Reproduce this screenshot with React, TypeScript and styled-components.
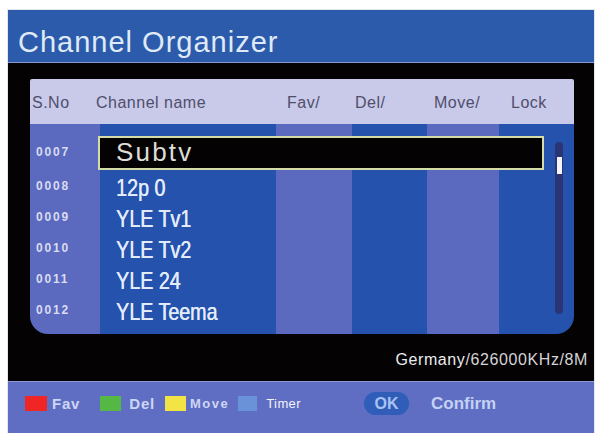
import React from 'react';
import styled, { createGlobalStyle } from 'styled-components';

const GlobalStyle = createGlobalStyle`
    body {
        margin: 0;
        background: #ffffff;
        font-family: 'Liberation Sans', Arial, sans-serif;
    }
`;

const channels = [
    { no: '0007', name: 'Subtv', selected: true },
    { no: '0008', name: '12p 0' },
    { no: '0009', name: 'YLE Tv1' },
    { no: '0010', name: 'YLE Tv2' },
    { no: '0011', name: 'YLE 24' },
    { no: '0012', name: 'YLE Teema' },
];

const keys = [
    { color: '#f02526', label: 'Fav', size: 15, weight: 700, spacing: 0.8, textColor: '#cdd6f6', gap: 5, after: 20, swatch: 22 },
    { color: '#55b844', label: 'Del', size: 15, weight: 700, spacing: 0.8, textColor: '#cdd6f6', gap: 8, after: 10, swatch: 21 },
    { color: '#f2e444', label: 'Move', size: 13, weight: 700, spacing: 1.5, textColor: '#cdd6f6', gap: 4, after: 9, swatch: 21 },
    { color: '#6a92d8', label: 'Timer', size: 13, weight: 400, spacing: 0.4, textColor: '#f2f4fb', gap: 9, after: 63, swatch: 19 },
];

export default function App() {
    return (
        <>
            <GlobalStyle />
            <Frame>
                <TitleBar>Channel Organizer</TitleBar>
                <Screen>
                    <Panel>
                        <Header>
                            <HeadCell>S.No</HeadCell>
                            <HeadCell>Channel name</HeadCell>
                            <HeadCell>Fav/</HeadCell>
                            <HeadCell>Del/</HeadCell>
                            <HeadCell>Move/</HeadCell>
                            <HeadCell>Lock</HeadCell>
                        </Header>
                        <Body>
                            <List>
                                {channels.map((ch) => (
                                    <Row key={ch.no} $selected={!!ch.selected}>
                                        <NoCell>{ch.no}</NoCell>
                                        <NameCell $selected={!!ch.selected}>
                                            {ch.selected ? <SelName>{ch.name}</SelName> : <Name>{ch.name}</Name>}
                                        </NameCell>
                                    </Row>
                                ))}
                            </List>
                            <Track>
                                <Thumb />
                            </Track>
                        </Body>
                    </Panel>
                    <Info>
                        <Region>Germany</Region>/626000KHz/8M
                    </Info>
                </Screen>
                <KeyBar>
                    {keys.map((k) => (
                        <Key key={k.label} $after={k.after}>
                            <Swatch $color={k.color} $width={k.swatch} />
                            <KeyLabel
                                $gap={k.gap}
                                $size={k.size}
                                $weight={k.weight}
                                $spacing={k.spacing}
                                $color={k.textColor}
                            >
                                {k.label}
                            </KeyLabel>
                        </Key>
                    ))}
                    <OkPill>OK</OkPill>
                    <Confirm>Confirm</Confirm>
                </KeyBar>
            </Frame>
        </>
    );
}

const Frame = styled.div`
    margin: 10px 0 0 8px;
    width: 586px;
    box-shadow: 0 0 0 1px #e4e6ee;
`;

const TitleBar = styled.div`
    height: 53px;
    box-sizing: border-box;
    padding: 17px 0 0 10px;
    background: #2d5bab;
    border-bottom: 1px solid #8898d4;
    color: #dfeaf6;
    font-size: 29px;
    letter-spacing: 1px;
    line-height: 30px;
`;

const Screen = styled.div`
    height: 318px;
    box-sizing: border-box;
    padding: 16px 20px 0 22px;
    background: #050204;
`;

const Panel = styled.div`
    width: 544px;
`;

const Header = styled.div`
    height: 45px;
    display: grid;
    grid-template-columns: 64px 191px 68px 79px 77px 1fr;
    align-items: center;
    padding-left: 2px;
    background: #c9c9e9;
    border-radius: 2px 2px 0 0;
`;

const HeadCell = styled.div`
    color: #4f4f6c;
    font-size: 16px;
    letter-spacing: 0.5px;
    padding-top: 2px;
`;

const Body = styled.div`
    height: 210px;
    display: flex;
    border-radius: 0 0 18px 18px;
    background: linear-gradient(
        to right,
        #5b69bf 0 70px,
        #2452ad 70px 246px,
        #5b69bf 246px 322px,
        #2452ad 322px 397px,
        #5b69bf 397px 469px,
        #2452ad 469px 544px
    );
`;

const List = styled.div`
    width: 514px;
    padding-top: 12px;
`;

const Row = styled.div<{ $selected: boolean }>`
    display: flex;
    align-items: center;
    height: ${(p) => (p.$selected ? 34 : 31)}px;
    margin-bottom: ${(p) => (p.$selected ? 2 : 0)}px;
`;

const NoCell = styled.div`
    width: 62px;
    padding-left: 6px;
    color: #d9dcf2;
    font-size: 12px;
    font-weight: 700;
    letter-spacing: 1.8px;
    margin-top: -3px;
`;

const NameCell = styled.div<{ $selected: boolean }>`
    flex: 1;
    height: 100%;
    box-sizing: border-box;
    display: flex;
    align-items: center;
    padding-left: ${(p) => (p.$selected ? 16 : 18)}px;
    background: ${(p) => (p.$selected ? '#050204' : 'transparent')};
    border: ${(p) => (p.$selected ? '2px solid #d6dca6' : 'none')};
`;

const SelName = styled.span`
    color: #dedcd6;
    font-size: 26px;
    letter-spacing: 2.2px;
    margin-top: -2px;
`;

const Name = styled.span`
    display: inline-block;
    color: #e4ecfa;
    font-size: 24px;
    transform: scaleX(0.82);
    transform-origin: left center;
    white-space: nowrap;
    text-shadow: 0.4px 0 0 #e4ecfa;
`;

const Track = styled.div`
    width: 8px;
    height: 172px;
    margin: 18px 0 0 11px;
    border-radius: 4px;
    background: #2b3574;
    padding-top: 15px;
    box-sizing: border-box;
`;

const Thumb = styled.div`
    width: 5px;
    height: 17px;
    margin-left: 2px;
    background: #f4f4fa;
`;

const Info = styled.div`
    margin: 16px -14px 0 0;
    text-align: right;
    color: #d4d4d6;
    font-size: 16px;
    letter-spacing: 0.6px;
    line-height: 20px;
`;

const Region = styled.span`
    color: #ececee;
`;

const KeyBar = styled.div`
    height: 52px;
    box-sizing: border-box;
    display: flex;
    align-items: center;
    padding: 0 0 8px 17px;
    background: #5f6dc2;
    border-top: 1px solid #8e9ad8;
`;

const Key = styled.div<{ $after: number }>`
    display: flex;
    align-items: center;
    margin-right: ${(p) => p.$after}px;
`;

const Swatch = styled.span<{ $color: string; $width: number }>`
    width: ${(p) => p.$width}px;
    height: 15px;
    background: ${(p) => p.$color};
`;

const KeyLabel = styled.span<{ $gap: number; $size: number; $weight: number; $spacing: number; $color: string }>`
    margin-left: ${(p) => p.$gap}px;
    font-size: ${(p) => p.$size}px;
    font-weight: ${(p) => p.$weight};
    letter-spacing: ${(p) => p.$spacing}px;
    color: ${(p) => p.$color};
`;

const OkPill = styled.span`
    width: 45px;
    height: 23px;
    border-radius: 12px;
    background: #2f5db8;
    color: #a9c2f2;
    font-size: 16px;
    font-weight: 700;
    display: flex;
    align-items: center;
    justify-content: center;
    margin-right: 22px;
`;

const Confirm = styled.span`
    color: #c4d2f4;
    font-size: 17px;
    font-weight: 700;
`;
